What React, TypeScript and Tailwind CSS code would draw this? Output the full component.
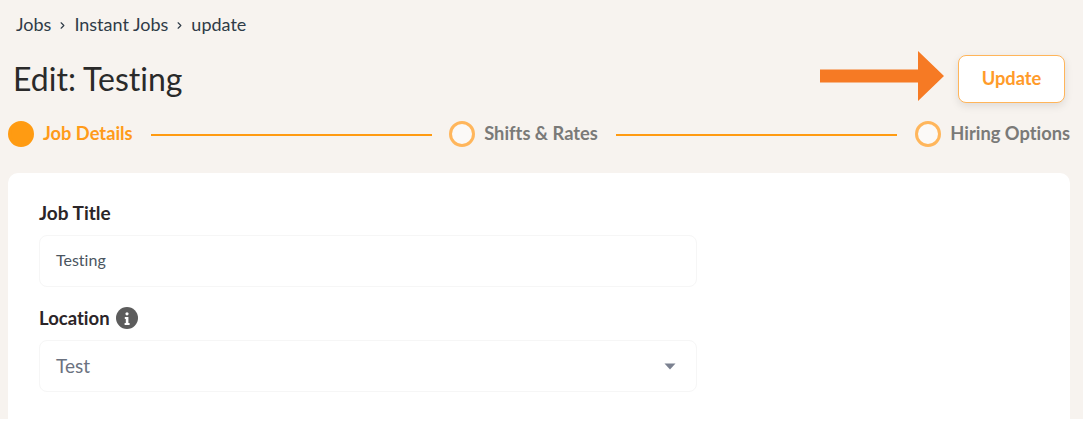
import React from 'react';
import { ChevronRight } from 'lucide-react';

const Step: React.FC<{ label: string; active?: boolean }> = ({ label, active }) => (
  <div className="flex items-center gap-[9px] shrink-0">
    <span
      className={`w-[26px] h-[26px] rounded-full border-[3px] ${
        active ? 'bg-[#ff9b12] border-[#ff9b12]' : 'bg-[#fbf9f7] border-[#ffb65c]'
      }`}
    />
    <span className={`text-[18.3px] font-bold ${active ? 'text-[#ff9b1a]' : 'text-[#7a7a78]'}`}>{label}</span>
  </div>
);

const Crumb: React.FC<{ label: string; last?: boolean }> = ({ label, last }) => (
  <>
    <span>{label}</span>
    {!last && <ChevronRight size={11} strokeWidth={2.5} className="mx-[6px] mt-[2px]" />}
  </>
);

const App: React.FC = () => {
  return (
    <div className="h-[427px] w-[1083px] bg-white overflow-hidden font-['Lato','Noto_Sans',sans-serif] [font-variant-ligatures:none]">
      <div className="h-[419px] bg-[#f7f3ef] overflow-hidden pl-[8px] pr-[13px]">
        <nav className="flex items-center h-[20px] mt-[14px] ml-[8px] text-[18px] text-[#2f3b47]">
          <Crumb label="Jobs" />
          <Crumb label="Instant Jobs" />
          <Crumb label="update" last />
        </nav>

        <header className="flex items-start justify-between mt-[21px] h-[48px]">
          <h1 className="ml-[5px] mt-[5px] text-[32px] leading-[38px] text-[#2a2a2a]">Edit: Testing</h1>
          <div className="flex items-start gap-[13px] mr-[5px]">
            <svg width="125" height="52" viewBox="0 0 125 52" className="mt-[-5px]">
              <path d="M0 19.5H98V1L124 26L98 51V32.5H0Z" fill="#f67a24" />
            </svg>
            <button className="w-[107px] h-[48px] rounded-[8px] border border-[#ffb55a] bg-white text-[18.3px] font-bold text-[#ff9b2a] shadow-[0_3px_8px_rgba(0,0,0,0.1)]">
              Update
            </button>
          </div>
        </header>

        <div className="flex items-center h-[26px] mt-[18px]">
          <Step label="Job Details" active />
          <div className="flex-1 h-[2px] mt-[2px] bg-[#ff9b12] ml-[18px] mr-[17px]" />
          <Step label="Shifts & Rates" />
          <div className="flex-1 h-[2px] mt-[2px] bg-[#ff9b12] mx-[18px]" />
          <Step label="Hiring Options" />
        </div>

        <main className="mt-[26px] h-[300px] bg-white rounded-t-[10px] pl-[31px] pt-[29px]">
          <div className="w-[658px]">
            <label className="block h-[22px] text-[19px] leading-[22px] font-bold text-[#2b2528]">Job Title</label>
            <div className="mt-[11px] h-[52px] flex items-center px-[16px] pb-[2px] rounded-[8px] border border-[#f6f6f6] text-[16px] text-[#4a5560]">
              Testing
            </div>
            <div className="mt-[20px] h-[22px] flex items-center gap-[6px]">
              <label className="text-[18.5px] leading-[22px] font-bold text-[#2b2528]">Location</label>
              <span className="w-[22px] h-[22px] rounded-full bg-[#5c5c5c] flex items-center justify-center">
                <svg width="6" height="13" viewBox="0 0 6 13">
                  <circle cx="3" cy="1.8" r="1.6" fill="#fff" />
                  <path d="M0.8 5H4.4V11H5.6V13H0.6V11H1.8V7H0.8Z" fill="#fff" />
                </svg>
              </span>
            </div>
            <div className="mt-[11px] h-[52px] flex items-center justify-between pl-[16px] pr-[20px] rounded-[8px] border border-[#f6f6f6] text-[19px] text-[#6b7280]">
              <span>Test</span>
              <svg width="12" height="7" viewBox="0 0 12 7">
                <path d="M0.5 0.5H11.5L6 6.5Z" fill="#7b8190" />
              </svg>
            </div>
          </div>
        </main>
      </div>
    </div>
  );
};

export default App;
